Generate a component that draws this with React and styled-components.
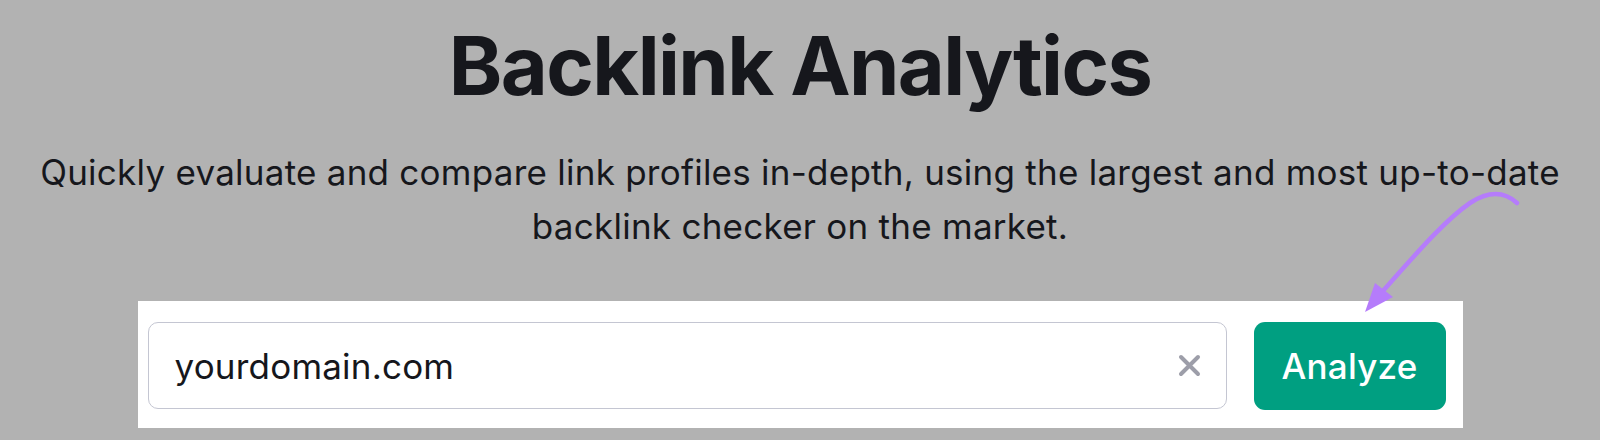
import React from 'react';
import styled, { createGlobalStyle } from 'styled-components';

const GlobalStyle = createGlobalStyle`
body {
    margin: 0;
    background: #b2b2b2;
    font-family: 'Inter', 'Noto Sans', sans-serif;
}
`;

const Page = styled.div`
position: relative;
width: 1600px;
height: 440px;
display: flex;
flex-direction: column;
align-items: center;
padding-top: 16px;
box-sizing: border-box;
overflow: hidden;
`;

const Title = styled.h1`
margin: 0;
font-size: 81px;
line-height: 100px;
font-weight: 700;
color: #16171c;
letter-spacing: -1.6px;
`;

const Lead = styled.p`
margin: 29px 0 0 0;
font-size: 35px;
line-height: 54px;
font-weight: 400;
color: #16171c;
text-align: center;
letter-spacing: 0.25px;
white-space: nowrap;
`;

const Panel = styled.div`
margin-top: 48px;
width: 1325px;
box-sizing: border-box;
background: #fff;
padding: 21px 17px 18px 10px;
display: flex;
gap: 27px;
`;

const Field = styled.div`
flex: 1;
height: 87px;
box-sizing: border-box;
border: 1.5px solid #c4c6d2;
border-radius: 10px;
display: flex;
align-items: center;
padding: 0 24px 0 26px;
`;

const Value = styled.span`
flex: 1;
font-size: 35px;
letter-spacing: 0.2px;
color: #16171c;
`;

const Clear = styled.button`
border: none;
background: none;
padding: 0;
width: 24px;
height: 24px;
display: flex;
align-items: center;
justify-content: center;
`;

const Button = styled.button`
width: 192px;
height: 88px;
border: none;
border-radius: 11px;
background: #009f81;
color: #fff;
font-family: 'Inter', 'Noto Sans', sans-serif;
font-size: 35px;
font-weight: 500;
letter-spacing: 0.2px;
`;

const Arrow = styled.svg`
position: absolute;
left: 0;
top: 0;
pointer-events: none;
`;

export default function App() {
    return (
        <Page>
            <GlobalStyle />
            <Title>Backlink Analytics</Title>
            <Lead>
                Quickly evaluate and compare link profiles in-depth, using the largest and most up-to-date<br />
                backlink checker on the market.
            </Lead>
            <Panel>
                <Field>
                    <Value>yourdomain.com</Value>
                    <Clear>
                        <svg width="23" height="23" viewBox="0 0 23 23">
                            <path d="M3 3 L20 20 M20 3 L3 20" stroke="#9d9ea9" strokeWidth="4" strokeLinecap="round" />
                        </svg>
                    </Clear>
                </Field>
                <Button>Analyze</Button>
            </Panel>
            <Arrow width="1600" height="440" viewBox="0 0 1600 440">
                <path d="M1517 203 C1505 192 1490 190 1470 203 C1445 220 1415 255 1382 292" fill="none" stroke="#b57cfb" strokeWidth="4.5" strokeLinecap="round" />
                <path d="M1365 312 L1375 283 L1393 297 Z" fill="#b57cfb" />
            </Arrow>
        </Page>
    );
}
